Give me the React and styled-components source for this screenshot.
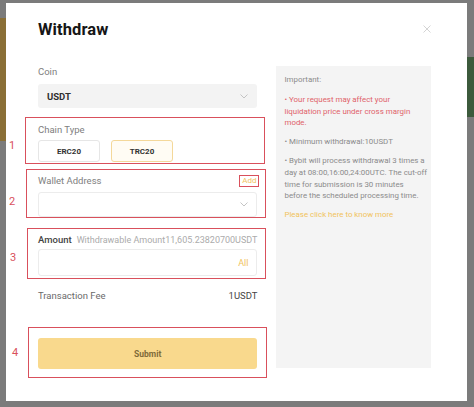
import React from 'react';
import styled, { createGlobalStyle } from 'styled-components';

const GlobalStyle = createGlobalStyle`
  html, body {
    margin: 0;
    padding: 0;
  }
  body {
    width: 474px;
    height: 407px;
    overflow: hidden;
    background: #7b7b7b;
    font-family: Roboto, "Liberation Sans", Arial, sans-serif;
  }
`;

const Screen = styled.div`
  display: flex;
  width: 474px;
  height: 407px;
  padding-top: 3px;
  box-sizing: border-box;
  background: #7b7b7b;
`;

const Edge = styled.div`
  width: ${(p) => p.w}px;
  flex-shrink: 0;
`;

const Patch = styled.div`
  margin-top: ${(p) => p.top}px;
  height: ${(p) => p.h}px;
  background: ${(p) => p.color};
`;

const Modal = styled.div`
  width: 461px;
  height: 398px;
  box-sizing: border-box;
  padding: 16px 36px 0 32px;
  background: #fff;
  display: flex;
  flex-direction: column;
`;

const Header = styled.div`
  display: flex;
  justify-content: space-between;
  align-items: center;
  height: 20px;
`;

const Title = styled.h1`
  margin: 0;
  font-size: 16.5px;
  font-weight: 700;
  color: #161616;
  letter-spacing: 0.1px;
`;

const Body = styled.div`
  display: flex;
  gap: 19px;
  margin-top: 27px;
`;

const FormColumn = styled.div`
  width: 220px;
  display: flex;
  flex-direction: column;
`;

const Label = styled.div`
  font-size: 9.5px;
  line-height: 12px;
  white-space: nowrap;
  color: ${(p) => (p.dark ? '#444' : '#7e7e7e')};
  font-weight: ${(p) => (p.dark ? 500 : 400)};
`;

const LabelRow = styled.div`
  display: flex;
  justify-content: space-between;
  align-items: center;
`;

const Hint = styled.span`
  margin-left: 5px;
  font-size: 9px;
  color: #ababab;
  font-weight: 400;
`;

const Select = styled.div`
  margin-top: 6px;
  height: 24px;
  border-radius: 3px;
  background: #f3f3f3;
  display: flex;
  align-items: center;
  justify-content: space-between;
  padding: 0 9px;
`;

const SelectValue = styled.span`
  font-size: 9.5px;
  font-weight: 700;
  color: #2f2f2f;
`;

const Marked = styled.div`
  position: relative;
  margin-top: ${(p) => p.mt}px;
`;

const Outline = styled.div`
  position: absolute;
  top: ${(p) => p.t}px;
  left: ${(p) => p.l}px;
  right: ${(p) => p.r}px;
  bottom: ${(p) => p.b}px;
  border: 1.5px solid #d9505c;
  pointer-events: none;
`;

const Num = styled.div`
  position: absolute;
  top: ${(p) => p.t}px;
  left: ${(p) => p.l}px;
  font-size: 11px;
  line-height: 14px;
  color: #d9505c;
`;

const ChainRow = styled.div`
  display: flex;
  gap: 11px;
  margin-top: 4px;
`;

const ChainButton = styled.div`
  width: 62px;
  height: 22px;
  box-sizing: border-box;
  border-radius: 3px;
  border: 1px solid ${(p) => (p.active ? '#f4d89a' : '#e6e6e6')};
  background: ${(p) => (p.active ? '#fffcf4' : '#fff')};
  display: flex;
  align-items: center;
  justify-content: center;
  font-size: 8px;
  font-weight: 700;
  color: #333;
`;

const AddLink = styled.span`
  margin-right: -2px;
  padding: 0 2px;
  height: 10px;
  line-height: 10px;
  font-size: 8px;
  color: #f1c35c;
  border: 1.5px solid #d9505c;
`;

const Input = styled.div`
  margin-top: ${(p) => p.mt}px;
  height: ${(p) => p.h}px;
  box-sizing: border-box;
  border: 1px solid #ececec;
  border-radius: 3px;
  display: flex;
  align-items: center;
  justify-content: flex-end;
  padding: 0 8px;
`;

const AllLink = styled.span`
  font-size: 9px;
  color: #f1c35c;
`;

const FeeRow = styled.div`
  margin-top: 14px;
  display: flex;
  justify-content: space-between;
  font-size: 9.5px;
  line-height: 12px;
  color: #6a6a6a;
`;

const FeeValue = styled.span`
  color: #444;
`;

const SubmitButton = styled.div`
  height: 31px;
  border-radius: 3px;
  background: #f9d98d;
  display: flex;
  align-items: center;
  justify-content: center;
  font-size: 8.5px;
  font-weight: 700;
  color: #7f6b3a;
`;

const InfoPanel = styled.div`
  width: 158px;
  height: 302px;
  box-sizing: border-box;
  padding: 8px 3px 8px 8px;
  background: #f4f4f4;
  font-size: 7.9px;
  line-height: 11.8px;
  color: #8b8b8b;
`;

const InfoText = styled.p`
  margin: ${(p) => p.mt}px 0 0;
  color: ${(p) => p.color || '#8b8b8b'};
`;

function Chevron() {
  return (
    <svg width="8" height="5" viewBox="0 0 8 5">
      <path d="M0.5 0.5 L4 4 L7.5 0.5" fill="none" stroke="#bdbdbd" strokeWidth="0.9" />
    </svg>
  );
}

function CloseIcon() {
  return (
    <svg width="8" height="8" viewBox="0 0 8 8">
      <path d="M0.5 0.5 L7.5 7.5 M7.5 0.5 L0.5 7.5" stroke="#cfcfcf" strokeWidth="0.9" />
    </svg>
  );
}

export default function App() {
  return (
    <Screen>
      <GlobalStyle />
      <Edge w={6}>
        <Patch top={15} h={123} color="#8a6f36" />
      </Edge>
      <Modal>
        <Header>
          <Title>Withdraw</Title>
          <CloseIcon />
        </Header>
        <Body>
          <FormColumn>
            <Label>Coin</Label>
            <Select>
              <SelectValue>USDT</SelectValue>
              <Chevron />
            </Select>

            <Marked mt={16}>
              <Outline t={-7} l={-13} r={-8} b={-2} />
              <Num t={15} l={-29}>1</Num>
              <Label>Chain Type</Label>
              <ChainRow>
                <ChainButton>ERC20</ChainButton>
                <ChainButton active>TRC20</ChainButton>
              </ChainRow>
            </Marked>

            <Marked mt={13}>
              <Outline t={-6} l={-12} r={-9} b={-1} />
              <Num t={20} l={-29}>2</Num>
              <LabelRow>
                <Label>Wallet Address</Label>
                <AddLink>Add</AddLink>
              </LabelRow>
              <Input mt={5} h={25}>
                <Chevron />
              </Input>
            </Marked>

            <Marked mt={17}>
              <Outline t={-6} l={-11} r={-9} b={-3} />
              <Num t={17} l={-28}>3</Num>
              <Label dark>
                Amount<Hint>Withdrawable Amount11,605.23820700USDT</Hint>
              </Label>
              <Input mt={3} h={27}>
                <AllLink>All</AllLink>
              </Input>
            </Marked>

            <FeeRow>
              <span>Transaction Fee</span>
              <FeeValue>1USDT</FeeValue>
            </FeeRow>

            <Marked mt={36}>
              <Outline t={-11} l={-10} r={-10} b={-9} />
              <Num t={8} l={-26}>4</Num>
              <SubmitButton>Submit</SubmitButton>
            </Marked>
          </FormColumn>

          <InfoPanel>
            <InfoText mt={0}>Important:</InfoText>
            <InfoText mt={8} color="#e0636a">
              • Your request may affect your<br />
              liquidation price under cross margin<br />
              mode.
            </InfoText>
            <InfoText mt={7}>• Minimum withdrawal:10USDT</InfoText>
            <InfoText mt={7}>
              • Bybit will process withdrawal 3 times a<br />
              day at 08:00,16:00,24:00UTC. The cut-off<br />
              time for submission is 30 minutes<br />
              before the scheduled processing time.
            </InfoText>
            <InfoText mt={7} color="#f1c35c">Please click here to know more</InfoText>
          </InfoPanel>
        </Body>
      </Modal>
      <Edge w={7}>
        <Patch top={54} h={60} color="#3c5a3c" />
      </Edge>
    </Screen>
  );
}
